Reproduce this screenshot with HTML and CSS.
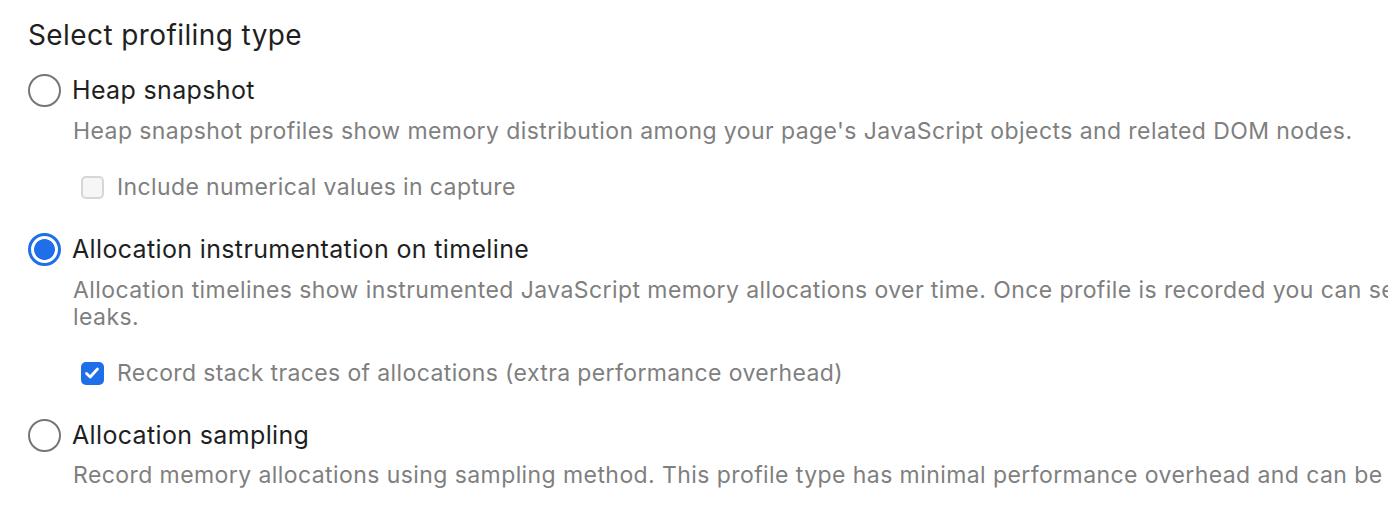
FILE: index.html
```html
<!DOCTYPE html>
<html>
<head>
<meta charset="utf-8">
<link rel="stylesheet" href="styles.css">
</head>
<body>
<div class="panel">
  <h1 class="title">Select profiling type</h1>
  <div class="option">
    <div class="row">
      <span class="radio"></span>
      <span class="label">Heap snapshot</span>
    </div>
    <p class="desc">Heap snapshot profiles show memory distribution among your page's JavaScript objects and related DOM nodes.</p>
    <div class="check-row">
      <span class="checkbox"></span>
      <span class="check-label">Include numerical values in capture</span>
    </div>
  </div>
  <div class="option">
    <div class="row">
      <span class="radio checked"></span>
      <span class="label">Allocation instrumentation on timeline</span>
    </div>
    <p class="desc">Allocation timelines show instrumented JavaScript memory allocations over time. Once profile is recorded you can select a time interval to see objects that were allocated within it and still alive by the end of recording. Use this profile type to isolate memory<br>leaks.</p>
    <div class="check-row">
      <span class="checkbox checked"><svg viewBox="0 0 22 22" width="22" height="22"><path d="M5.5 11.5 L9.2 15 L16.5 7" fill="none" stroke="#fff" stroke-width="2.8" stroke-linecap="round" stroke-linejoin="round"/></svg></span>
      <span class="check-label">Record stack traces of allocations (extra performance overhead)</span>
    </div>
  </div>
  <div class="option last">
    <div class="row">
      <span class="radio"></span>
      <span class="label">Allocation sampling</span>
    </div>
    <p class="desc">Record memory allocations using sampling method. This profile type has minimal performance overhead and can be used for long running operations.</p>
  </div>
</div>
</body>
</html>
```

FILE: styles.css
```css
html, body {
  margin: 0;
  padding: 0;
  background: #fff;
  overflow: hidden;
}
body {
  width: 1388px;
  height: 524px;
  font-family: Inter, "Noto Sans", sans-serif;
}
.panel {
  padding: 18px 0 0 28px;
  display: flex;
  flex-direction: column;
}
.title {
  margin: 0;
  font-size: 28px;
  font-weight: 400;
  line-height: 34px;
  letter-spacing: 0.4px;
  color: #1f1f1f;
}
.option {
  margin-top: 20px;
  display: flex;
  flex-direction: column;
}
.option + .option {
  margin-top: 30px;
}
.option.last {
  margin-top: 30px;
}
.row {
  display: flex;
  align-items: center;
  height: 36px;
  gap: 11px;
}
.radio {
  box-sizing: border-box;
  width: 33px;
  height: 33px;
  border-radius: 50%;
  border: 2px solid #767676;
  flex: none;
}
.radio.checked {
  border: 3px solid #1f6feb;
  background: radial-gradient(circle, #1f6feb 0 10px, #fff 10.8px);
}
.label {
  font-size: 25px;
  letter-spacing: 0.35px;
  color: #1f1f1f;
  line-height: 36px;
}
.desc {
  margin: 10px 0 0 45px;
  font-size: 23px;
  letter-spacing: 0.42px;
  line-height: 27px;
  color: #7f7f7f;
  white-space: nowrap;
}
.option.last .desc {
  margin-top: 9px;
}
.check-row {
  margin: 28px 0 0 53px;
  display: flex;
  align-items: center;
  height: 28px;
  gap: 13px;
}
.checkbox {
  box-sizing: border-box;
  width: 23px;
  height: 23px;
  border-radius: 5px;
  border: 2px solid #d6d6d6;
  background: #f6f6f6;
  flex: none;
  display: flex;
}
.checkbox.checked {
  border: none;
  background: #1f6feb;
}
.check-label {
  font-size: 23px;
  letter-spacing: 0.38px;
  color: #7f7f7f;
  line-height: 28px;
}
```
